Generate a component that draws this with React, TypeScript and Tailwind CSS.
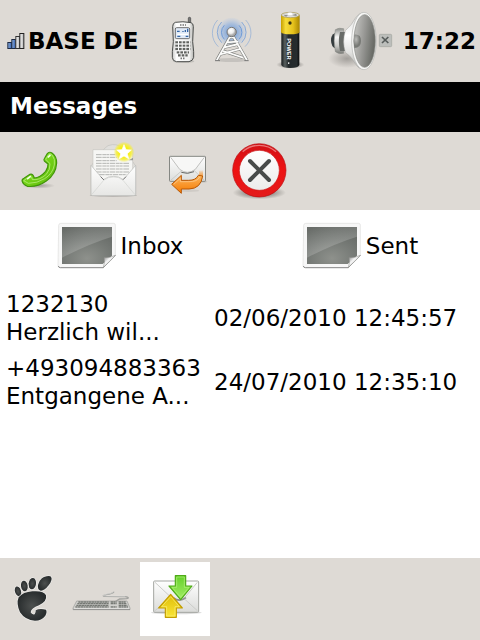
import React from 'react';

interface Message {
  sender: string;
  preview: string;
  date: string;
}

const messages: Message[] = [
  { sender: '1232130', preview: 'Herzlich wil...', date: '02/06/2010 12:45:57' },
  { sender: '+493094883363', preview: 'Entgangene A...', date: '24/07/2010 12:35:10' },
];

const SignalIcon = () => (
  <svg className="h-[18px] w-[18px] shrink-0" viewBox="20 99 54 54" aria-hidden="true">
    <defs>
      <linearGradient id="signalOn" x2="1">
        <stop stopColor="#8fb0e0" />
        <stop offset="1" stopColor="#2c59a8" />
      </linearGradient>
      <linearGradient id="signalOff" x2="1">
        <stop stopColor="#f6f6f6" />
        <stop offset="1" stopColor="#b9b9b9" />
      </linearGradient>
    </defs>
    <g strokeWidth="3">
      <rect x="22.500" y="130.500" width="12" height="18" fill="url(#signalOn)" stroke="#1d2a44" />
      <rect x="34.500" y="121.500" width="12" height="27" fill="url(#signalOn)" stroke="#1d2a44" />
      <rect x="46.500" y="112.500" width="12" height="36" fill="url(#signalOff)" stroke="#333" />
      <rect x="58.500" y="103.500" width="12" height="45" fill="url(#signalOff)" stroke="#222" />
    </g>
  </svg>
);

const MobileIcon = () => (
  <svg className="h-[72px] w-6" viewBox="30 15 72 216" aria-hidden="true">
    <defs>
      <linearGradient id="mobileBody" x2="1">
        <stop stopColor="#c9c9c7" />
        <stop offset=".2" stopColor="#fff" />
        <stop offset=".8" stopColor="#f2f2f0" />
        <stop offset="1" stopColor="#b5b5b2" />
      </linearGradient>
    </defs>
    <ellipse cx="68" cy="184" rx="32" ry="5" fill="#b5b3ae" opacity=".7" />
    <rect x="82" y="52" width="7" height="24" rx="3" fill="#777" stroke="#444" strokeWidth="2" />
    <path d="M43 67Q65 63 90 68Q97 70 97 80L95 125L98 155V172Q96 183 84 185H46Q34 183 34 172V155L37 125L35 80Q35 69 43 67Z" fill="url(#mobileBody)" stroke="#4c4e4c" strokeWidth="3" />
    <path d="M58 75h3m4 0h3m4 0h2M59 175h3m5 0h3" stroke="#333" strokeWidth="5" />
    <rect x="43" y="83" width="43" height="33" rx="4" fill="#dfe9f6" stroke="#555" strokeWidth="2.500" />
    <path d="M48 94h8M66 96v-3M73 96v-6M80 96V86M49 109h9m16 0h8" stroke="#3465a4" strokeWidth="4" />
    <path d="M49 103h32" stroke="#fff" strokeWidth="4" />
    <g fill="none" stroke="#60625f" strokeWidth="7" strokeDasharray="8 3" strokeLinecap="butt">
      <path d="M43 127H88" />
      <path d="M43 137H88" />
      <path d="M43 147H88" />
      <path d="M47 157H84" />
      <path d="M51 166H80" />
    </g>
    <path d="M43 132h45M43 142h45M43 152h45" stroke="#f5f5f5" strokeWidth="2" />
  </svg>
);

const AntennaIcon = () => (
  <svg className="h-[72px] w-11" viewBox="150 15 132 216" aria-hidden="true">
    <defs>
      <radialGradient id="waveGlow">
        <stop stopColor="#5c8fd4" />
        <stop offset=".6" stopColor="#8fb1e0" stopOpacity=".65" />
        <stop offset="1" stopColor="#a9c2e6" stopOpacity=".1" />
      </radialGradient>
      <radialGradient id="antennaBall" cx=".4" cy=".35">
        <stop stopColor="#fff" />
        <stop offset=".6" stopColor="#eee" />
        <stop offset="1" stopColor="#aaa" />
      </radialGradient>
    </defs>
    <circle cx="212" cy="97" r="44" fill="url(#waveGlow)" />
    <g fill="none" stroke="#6f9bd8" strokeWidth="3">
      <path d="M190 76a30 30 0 0 0 0 42M234 76a30 30 0 0 1 0 42" />
      <path d="M182 66a43 43 0 0 0 0 62M242 66a43 43 0 0 1 0 62" opacity=".75" />
      <path d="M170 60a56 56 0 0 0 2 80M254 60a56 56 0 0 1-2 80" opacity=".5" />
    </g>
    <ellipse cx="212" cy="180" rx="48" ry="6" fill="#bbb8b3" opacity=".7" />
    <g fill="none" strokeLinejoin="round">
      <path d="M167 181L206 112H218L258 181M196 127L231 125M190 142L233 132M177 163L241 146M186 153L246 173" stroke="#7b7d7a" strokeWidth="9" />
      <path d="M167 181L206 112H218L258 181M196 127L231 125M190 142L233 132M177 163L241 146M186 153L246 173" stroke="#fbfbfa" strokeWidth="5.500" />
    </g>
    <path d="M162 182h15m73 0h13" stroke="#777" strokeWidth="3" />
    <circle cx="212" cy="96" r="14" fill="url(#antennaBall)" stroke="#777" strokeWidth="3" />
  </svg>
);

const BatteryIcon = () => (
  <svg className="h-[72px] w-10" viewBox="30 15 120 216" aria-hidden="true">
    <defs>
      <linearGradient id="batteryTop" x2="1">
        <stop stopColor="#c7a000" />
        <stop offset=".25" stopColor="#f6dc3c" />
        <stop offset=".65" stopColor="#e6c21c" />
        <stop offset="1" stopColor="#a98500" />
      </linearGradient>
      <linearGradient id="batteryBody" x2="1">
        <stop stopColor="#15191b" />
        <stop offset=".2" stopColor="#59605f" />
        <stop offset=".4" stopColor="#23292b" />
        <stop offset=".85" stopColor="#262c2e" />
        <stop offset="1" stopColor="#0b0e0f" />
      </linearGradient>
      <radialGradient id="batteryShadow">
        <stop offset=".4" stopColor="#8f8c88" />
        <stop offset="1" stopColor="#8f8c88" stopOpacity="0" />
      </radialGradient>
    </defs>
    <ellipse cx="88" cy="194" rx="42" ry="12" fill="url(#batteryShadow)" />
    <path d="M61 96V195Q64 204 88 204T115 195V96Z" fill="url(#batteryBody)" />
    <path d="M60 46V97Q64 103 88 103T116 97V46Z" fill="url(#batteryTop)" />
    <ellipse cx="88" cy="45" rx="27" ry="8" fill="#ddd" stroke="#a69446" strokeWidth="2" />
    <path d="M67 44L82 46L75 50ZM93 46L106 41L107 48Z" fill="#8e8e8b" />
    <ellipse cx="87" cy="42" rx="9" ry="5" fill="#fff" stroke="#aaa" />
    <circle cx="87" cy="69" r="5" fill="#3b3210" />
    <text transform="translate(79 115) rotate(90)" fontFamily="'Liberation Sans', sans-serif" fontWeight="bold" fontSize="17" fill="#fff">POWER</text>
    <path d="M83 187v5" stroke="#ddd" strokeWidth="4" />
  </svg>
);

const SpeakerIcon = () => (
  <svg className="h-[72px] w-[68px]" viewBox="198 15 204 216" aria-hidden="true">
    <defs>
      <linearGradient id="speakerCone" x1="0" x2="1" y2=".3">
        <stop stopColor="#cacac7" />
        <stop offset=".5" stopColor="#9c9c99" />
        <stop offset="1" stopColor="#6a6c67" />
      </linearGradient>
      <linearGradient id="speakerBack" x2="0" y2="1">
        <stop stopColor="#8b8d89" />
        <stop offset=".35" stopColor="#f7f7f6" />
        <stop offset=".7" stopColor="#c8c8c5" />
        <stop offset="1" stopColor="#777975" />
      </linearGradient>
      <linearGradient id="speakerFlare" x2="0" y2="1">
        <stop stopColor="#d5d5d3" />
        <stop offset=".4" stopColor="#fff" />
        <stop offset=".7" stopColor="#e2e2e0" />
        <stop offset="1" stopColor="#b0b0ad" />
      </linearGradient>
      <radialGradient id="speakerBall" cx=".35" cy=".35">
        <stop stopColor="#bcbcb9" />
        <stop offset="1" stopColor="#777975" />
      </radialGradient>
      <radialGradient id="speakerShadow">
        <stop stopColor="#8f8c88" />
        <stop offset="1" stopColor="#8f8c88" stopOpacity="0" />
      </radialGradient>
    </defs>
    <ellipse cx="258" cy="176" rx="56" ry="28" fill="url(#speakerShadow)" opacity=".75" />
    <path d="M222 99Q209 105 210 122T222 145Z" fill="#343b3d" />
    <path d="M223 89Q234 82 248 86V160Q234 164 223 155Q216 122 223 89Z" fill="url(#speakerBack)" stroke="#858783" strokeWidth="1.500" />
    <path d="M237 96H263V153H237Q230 124 237 96Z" fill="#686b68" />
    <path d="M253 92Q272 76 284 53Q293 39 306 38V208Q292 206 284 193Q272 170 253 157Q243 124 253 92Z" fill="url(#speakerFlare)" stroke="#a6a7a4" strokeWidth="1.500" />
    <ellipse cx="309" cy="123" rx="37" ry="86" fill="#f8f8f7" stroke="#b4b5b2" strokeWidth="2" />
    <ellipse cx="311" cy="123" rx="32" ry="79" fill="url(#speakerCone)" stroke="#888a85" strokeWidth="2" />
    <path d="M280 104Q300 102 300 123T280 144Q275 123 280 104Z" fill="url(#speakerBall)" />
    <rect x="355" y="103" width="37" height="37" rx="3" fill="#bcbebb" stroke="#a2a49f" strokeWidth="2" />
    <path d="M363 111L382 129M382 111L363 129" stroke="#565b5a" strokeWidth="5" />
  </svg>
);

const CallIcon = () => (
  <svg className="size-16" viewBox="24 27 192 192" aria-hidden="true">
    <defs>
      <linearGradient id="handset" x2="1" y2="1">
        <stop stopColor="#a5f05b" />
        <stop offset=".5" stopColor="#73d216" />
        <stop offset="1" stopColor="#5bb40c" />
      </linearGradient>
      <radialGradient id="callShadow">
        <stop stopColor="#8f8c88" />
        <stop offset="1" stopColor="#8f8c88" stopOpacity="0" />
      </radialGradient>
    </defs>
    <ellipse cx="115" cy="167" rx="50" ry="9" fill="url(#callShadow)" opacity=".8" />
    <path d="M142 71Q148 63 157 70Q170 80 170 99Q168 133 139 153Q112 172 82 169Q69 163 67 155Q64 149 72 145L90 133Q99 130 103 144Q120 143 137 124Q145 112 144 102L133 93Q130 89 134 84Z" fill="url(#handset)" stroke="#41940b" strokeWidth="3.500" strokeLinejoin="round" />
    <path d="M137 88L147 73Q152 70 157 76Q166 87 163 105Q158 131 134 146Q112 160 85 160L71 152L91 138Q96 139 97 149Q120 151 139 133Q151 119 150 101Z" fill="none" stroke="#b6ed7a" strokeWidth="3" opacity=".8" />
    <path d="M145 81L150 76M83 146L91 140" stroke="#f3ffe8" strokeWidth="5" strokeLinecap="round" />
  </svg>
);

const NewMessageIcon = () => (
  <svg className="size-16" viewBox="243 27 192 192" aria-hidden="true">
    <defs>
      <linearGradient id="letterFront" x2="0" y2="1">
        <stop stopColor="#fff" />
        <stop offset="1" stopColor="#e6e6e4" />
      </linearGradient>
      <radialGradient id="starGlow">
        <stop offset=".5" stopColor="#f6ee16" />
        <stop offset=".75" stopColor="#f5ed42" stopOpacity=".85" />
        <stop offset="1" stopColor="#f5ed42" stopOpacity="0" />
      </radialGradient>
    </defs>
    <ellipse cx="340" cy="196" rx="71" ry="4" fill="#8f8c88" opacity=".6" />
    <path d="M273 108L313 56Q323 44 337 44Q360 43 373 59L407 108V194H273Z" fill="#e0dfdc" stroke="#b9b8b5" strokeWidth="1.500" />
    <path d="M279 59H398V155H279Z" fill="#f6f6f4" stroke="#bcbcb9" strokeWidth="1.500" />
    <g stroke="#b4b5b2" strokeWidth="3" strokeDasharray="17 2 11 1 8 2">
      <path d="M288 74H349" />
      <path d="M288 82H350" />
      <path d="M288 92H350" />
      <path d="M288 100H389" />
      <path d="M288 108H389" />
      <path d="M288 117H389" />
      <path d="M288 126H389" />
      <path d="M297 134H380" />
    </g>
    <path d="M273 106L310 149Q326 138 341 139Q356 138 370 149L407 106V193Q407 197 402 197H278Q273 197 273 193Z" fill="url(#letterFront)" stroke="#b8b9b6" strokeWidth="2" />
    <path d="M275 194L311 151Q325 140 341 141Q357 140 369 151L405 194" fill="none" stroke="#d2d3d0" strokeWidth="2" />
    <path d="M302 140L312 150M378 140L369 149" stroke="#777" strokeWidth="3" />
    <path d="M386 91l13-8v8z" fill="#9a9b97" />
    <circle cx="372" cy="66" r="31" fill="url(#starGlow)" />
    <path d="M372 44L378 59L394 60L382 71L386 86L372 78L358 86L362 71L350 60L366 59Z" fill="#fff" strokeLinejoin="round" stroke="#fff" strokeWidth="2" />
  </svg>
);

const ReplyIcon = () => (
  <svg className="size-16" viewBox="12 27 192 192" aria-hidden="true">
    <defs>
      <linearGradient id="replyArrow" x2="0" y2="1">
        <stop stopColor="#fcb65c" />
        <stop offset="1" stopColor="#f57900" />
      </linearGradient>
      <linearGradient id="replyTail" x1="0" x2="0" y1="0" y2="1">
        <stop stopColor="#f57900" stopOpacity="0" />
        <stop offset="1" stopColor="#f9a13f" />
      </linearGradient>
      <linearGradient id="replyPaper" x2="0" y2="1">
        <stop stopColor="#fff" />
        <stop offset="1" stopColor="#dcdddb" />
      </linearGradient>
    </defs>
    <ellipse cx="120" cy="155" rx="52" ry="4" fill="#aaa7a2" opacity=".5" />
    <ellipse cx="115" cy="182" rx="33" ry="4" fill="#b8b5b0" opacity=".4" />
    <rect x="58.500" y="79" width="108" height="75" rx="2" fill="url(#replyPaper)" stroke="#858783" strokeWidth="3" />
    <path d="M62 151L98 120M163 151L131 120" stroke="#bdbebb" strokeWidth="2" />
    <path d="M62 82L89 118Q112 136 136 118L163 82" fill="#f7f7f6" stroke="#b4b5b2" strokeWidth="2.500" />
    <path d="M94 127Q112 134 132 125" fill="none" stroke="#666865" strokeWidth="3" />
    <path d="M145 138Q149 131 147 122L159 120V140Z" fill="url(#replyTail)" />
    <path d="M65 163L94 136V151H116Q138 151 145 136L158 138Q153 176 117 177H94V190Z" fill="url(#replyArrow)" stroke="#b85705" strokeWidth="3" strokeLinejoin="round" />
    <path d="M71 163L91 145V155H116Q142 156 150 140" fill="none" stroke="#fdd09a" strokeWidth="2" />
  </svg>
);

const DeleteIcon = () => (
  <svg className="size-16" viewBox="231 27 192 192" aria-hidden="true">
    <defs>
      <linearGradient id="deleteRing" x2="0" y2="1">
        <stop stopColor="#d21217" />
        <stop offset=".5" stopColor="#ee1212" />
        <stop offset="1" stopColor="#e31b1b" />
      </linearGradient>
      <linearGradient id="deleteFace" x2="0" y2="1">
        <stop stopColor="#fff" />
        <stop offset="1" stopColor="#ececeb" />
      </linearGradient>
      <radialGradient id="deleteShadow">
        <stop offset=".4" stopColor="#77746f" />
        <stop offset="1" stopColor="#77746f" stopOpacity="0" />
      </radialGradient>
    </defs>
    <ellipse cx="328" cy="188" rx="80" ry="20" fill="url(#deleteShadow)" opacity=".8" />
    <circle cx="328" cy="121" r="80" fill="url(#deleteRing)" stroke="#b90c10" strokeWidth="2" />
    <path d="M278 65A75 75 0 0 1 378 65" fill="none" stroke="#f4a0a0" strokeWidth="4" opacity=".7" />
    <circle cx="328" cy="121" r="60" fill="url(#deleteFace)" stroke="#c91a1a" strokeWidth="2" />
    <path d="M300 93L357 150M357 93L300 150" stroke="#484b4a" strokeWidth="12" strokeLinecap="round" />
  </svg>
);

const FolderIcon = ({ id }: { id: string }) => (
  <svg className="h-12 w-[60px] shrink-0" viewBox="51 36 180 144" aria-hidden="true">
    <defs>
      <radialGradient id={`${id}Screen`} cx=".5" cy=".85" r=".9">
        <stop stopColor="#8e918c" />
        <stop offset=".6" stopColor="#727672" />
        <stop offset="1" stopColor="#626662" />
      </radialGradient>
      <linearGradient id={`${id}Shine`} x1="0" x2=".7" y2="1">
        <stop stopColor="#fff" stopOpacity=".03" />
        <stop offset="1" stopColor="#fff" stopOpacity=".25" />
      </linearGradient>
      <linearGradient id={`${id}Curl`} x2="1" y2="1">
        <stop stopColor="#666" />
        <stop offset=".4" stopColor="#f6f6f6" />
        <stop offset="1" stopColor="#aaa" />
      </linearGradient>
    </defs>
    <path d="M62 40H221Q227 40 226 47V135L190 173H60Q54 173 54 166L56 46Q57 40 62 40Z" fill="#f7f7f7" stroke="#dededd" strokeWidth="2" />
    <path d="M55 168Q56 173 61 173H190L226 136" fill="none" stroke="#8a8a8a" strokeWidth="3" />
    <path d="M66 51H216V137L188 162H66Z" fill={`url(#${id}Screen)`} />
    <path d="M66 51H216V80Q150 100 66 143Z" fill={`url(#${id}Shine)`} />
    <path d="M190 172Q196 157 192 142Q209 145 226 136Q214 151 190 172Z" fill={`url(#${id}Curl)`} stroke="#888a87" strokeWidth="1.500" />
  </svg>
);

const FootIcon = () => (
  <svg className="h-full w-full" viewBox="0 36 210 222" aria-hidden="true">
    <defs>
      <radialGradient id="footFill">
        <stop stopColor="#4d504f" />
        <stop offset="1" stopColor="#292d2e" />
      </radialGradient>
    </defs>
    <g fill="url(#footFill)" stroke="#efeeec" strokeWidth="4" paintOrder="stroke">
      <path d="M153 80Q159 89 146 106Q133 123 122 122Q112 120 114 105Q118 88 132 81Q148 76 153 80Z" />
      <ellipse cx="97" cy="101" rx="11" ry="17" transform="rotate(8 97 101)" />
      <ellipse cx="73" cy="108" rx="10" ry="16" transform="rotate(-8 73 108)" />
      <ellipse cx="54" cy="124" rx="9" ry="15" transform="rotate(-18 54 124)" />
      <path d="M97 124Q131 121 138 136Q142 154 117 166Q93 175 92 187Q96 195 104 193Q108 188 107 181Q118 174 138 179Q142 186 136 197Q125 212 105 212Q76 211 60 187Q48 161 56 142Q69 126 97 124Z" />
    </g>
  </svg>
);

const KeyboardIcon = () => (
  <svg className="h-full w-full" viewBox="210 36 210 222" aria-hidden="true">
    <path d="M342 125Q337 132 319 134Q302 138 317 139L376 140Q391 143 380 146L359 147L347 154" fill="none" stroke="#a0a19e" strokeWidth="4" />
    <path d="M342 124Q337 131 319 133Q302 137 317 138L376 139" fill="none" stroke="#e7e7e5" strokeWidth="1.500" />
    <path d="M230 153H381L390 174V179H219V174Z" fill="#cfcfcc" stroke="#9a9c98" strokeWidth="2" />
    <g fill="none" stroke="#767974" strokeWidth="4" strokeDasharray="7 1">
      <path d="M235 156H326M332 156H350M356 156H377" />
      <path d="M232 161H326M332 161H350M356 161H380" />
      <path d="M229 166H326M356 166H382" />
      <path d="M226 171H326M332 171H350M356 171H384" />
    </g>
    <path d="M220 178H390" stroke="#7d7f7b" strokeWidth="2" />
    <path d="M222 175H388" stroke="#f3f3f1" strokeWidth="2" />
  </svg>
);

const MailTransferIcon = () => (
  <svg className="h-full w-full" viewBox="30 36 210 222" aria-hidden="true">
    <defs>
      <linearGradient id="mailPaper" x2="0" y2="1">
        <stop stopColor="#fff" />
        <stop offset="1" stopColor="#dadbd9" />
      </linearGradient>
      <linearGradient id="mailDown" x2="0" y2="1">
        <stop stopColor="#65d02b" />
        <stop offset="1" stopColor="#a3ee65" />
      </linearGradient>
      <linearGradient id="mailUp" x2="0" y2="1">
        <stop stopColor="#dfbd08" />
        <stop offset="1" stopColor="#f9e536" />
      </linearGradient>
    </defs>
    <ellipse cx="139" cy="188" rx="76" ry="5" fill="#aaa" opacity=".4" />
    <rect x="71" y="93" width="135" height="94" rx="3" fill="url(#mailPaper)" stroke="#a3a5a1" strokeWidth="3" />
    <path d="M75 182L122 143M202 182L158 142M75 97L124 143Q145 157 164 143L202 97" fill="none" stroke="#cbccc9" strokeWidth="3" />
    <path d="M131 144Q148 157 168 143" fill="none" stroke="#8f918e" strokeWidth="5" />
    <path d="M136 77H167V108H186L152 149L117 108H136Z" fill="url(#mailDown)" stroke="#4eaa17" strokeWidth="3.500" strokeLinejoin="round" />
    <path d="M140 81H163V112H177L152 142L126 112H140Z" fill="none" stroke="#b3f27c" strokeWidth="2" />
    <path d="M122 133L157 174H139V202H106V174H86Z" fill="url(#mailUp)" stroke="#c39d00" strokeWidth="3.500" strokeLinejoin="round" />
    <path d="M122 140L148 170H135V198H110V170H95Z" fill="none" stroke="#fbf078" strokeWidth="2" />
  </svg>
);

const actions = [
  { label: 'Call', icon: <CallIcon /> },
  { label: 'New message', icon: <NewMessageIcon /> },
  { label: 'Reply', icon: <ReplyIcon /> },
  { label: 'Delete', icon: <DeleteIcon /> },
];

const StatusBar = () => (
  <header className="flex h-[82px] shrink-0 items-center bg-[#dedad5] pl-[7px] pr-1 font-bold">
    <div className="flex items-center gap-[3px]">
      <SignalIcon />
      <span className="whitespace-nowrap">BASE DE</span>
    </div>
    <div className="ml-auto mr-2 flex items-center gap-4">
      <MobileIcon />
      <AntennaIcon />
      <BatteryIcon />
      <SpeakerIcon />
    </div>
    <time>17:22</time>
  </header>
);

const TaskBar = () => (
  <nav className="flex h-[82px] shrink-0 bg-[#dedad5] py-1">
    <button type="button" aria-label="Home" className="w-[70px]">
      <FootIcon />
    </button>
    <button type="button" aria-label="Keyboard" className="w-[70px]">
      <KeyboardIcon />
    </button>
    <button type="button" aria-label="Messages" className="w-[70px] bg-white">
      <MailTransferIcon />
    </button>
  </nav>
);

const App: React.FC = () => {
  return (
    <div className="flex min-h-screen flex-col bg-white font-['DejaVu_Sans',sans-serif] text-[23px] leading-7 text-black">
      <StatusBar />
      <h1 className="flex h-[50px] shrink-0 items-center bg-black px-[10px] pb-[2px] font-bold text-white">Messages</h1>
      <div className="flex h-[78px] shrink-0 items-center gap-[9px] bg-[#dedad5] px-2">
        {actions.map((action) => (
          <button key={action.label} type="button" aria-label={action.label}>
            {action.icon}
          </button>
        ))}
      </div>

      <main className="flex-1">
        <div className="grid grid-cols-2 pb-4 pt-3">
          <button type="button" className="flex items-center justify-center gap-1">
            <FolderIcon id="inbox" />
            Inbox
          </button>
          <button type="button" className="flex items-center justify-center gap-1">
            <FolderIcon id="sent" />
            Sent
          </button>
        </div>
        <table className="w-full">
          <tbody>
            {messages.map((message) => (
              <tr key={message.date}>
                <td className="w-[214px] whitespace-nowrap py-1 pl-[6px]">
                  <div>{message.sender}</div>
                  <div>{message.preview}</div>
                </td>
                <td className="whitespace-nowrap">{message.date}</td>
              </tr>
            ))}
          </tbody>
        </table>
      </main>

      <TaskBar />
    </div>
  );
};

export default App;
